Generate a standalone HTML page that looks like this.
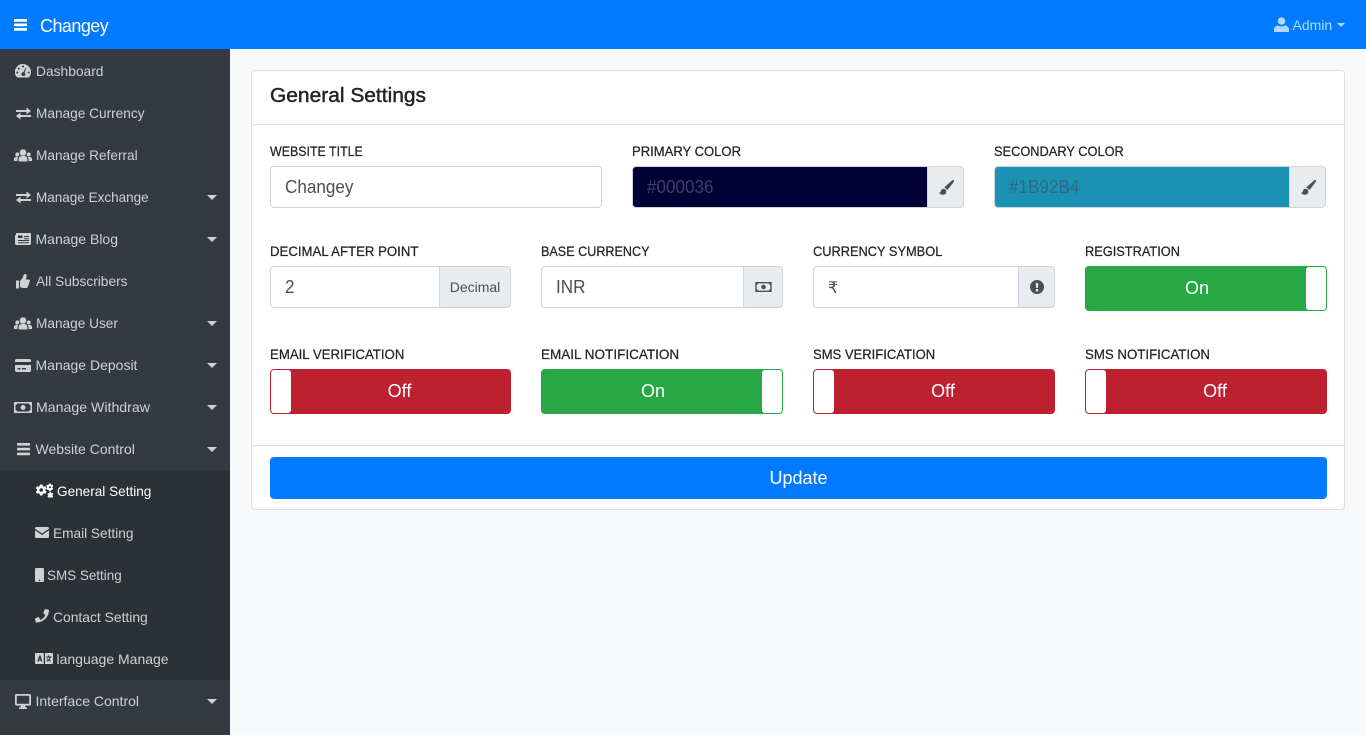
<!DOCTYPE html>
<html lang="en"><head><meta charset="utf-8"><title>General Settings</title>
<style>
html,body{margin:0;padding:0;width:1366px;height:735px;overflow:hidden;background:#f8f9fa;font-family:"Liberation Sans",sans-serif}
div,span,svg{box-sizing:border-box}
.a{position:absolute}
.t{position:absolute;white-space:nowrap;line-height:20px;height:20px;transform-origin:0 50%}
nav{position:absolute;left:0;top:0;width:1366px;height:49px;background:#007bff}
aside{position:absolute;left:0;top:49px;width:230px;height:686px;background:#343a40}
.sub{position:absolute;left:0;top:421px;width:230px;height:210px;background:#2c3136}
.m{color:#cfd1d3;font-size:14px;left:35.5px}
.s{color:#cfd1d3;font-size:14px}
svg.i{position:absolute;fill:#cfd1d3}
.car{position:absolute;left:207px;width:0;height:0;border-left:5px solid transparent;border-right:5px solid transparent;border-top:5px solid #cfd1d3}
.card{position:absolute;left:251px;top:70px;width:1094px;height:440px;background:#fff;border:1px solid #dfdfdf;border-radius:4px}
.l{position:absolute;font-size:14px;color:#212529;white-space:nowrap;line-height:20px;-webkit-text-stroke:.25px #212529;transform-origin:0 50%}
.f{position:absolute;background:#fff;border:1px solid #ced4da;border-radius:4px;height:42px;font-size:18px;color:#495057;line-height:41px;padding-left:14px}
.f span{display:inline-block;transform-origin:0 50%;transform:scaleX(.95)}
.ad{position:absolute;height:42px;background:#e9ecef;border:1px solid #ced4da;border-radius:0 4px 4px 0;color:#495057;text-align:center;line-height:40px}
.tg{position:absolute;width:242px;height:45px;border-radius:4px;color:#fff;font-size:18px;line-height:42px;text-align:center}
.on{background:#28a745;border:1px solid #28a745}
.off{background:#bd2130;border:1px solid #bd2130}
.th{position:absolute;top:0;width:20px;height:43px;background:#fff;border-radius:3px}
</style></head><body>
<nav>
<svg class="i" style="left:14px;top:19px;fill:#fff" width="13" height="12" viewBox="0 0 13 12"><rect y="0" width="13" height="2.800" rx=".5"/><rect y="4.500" width="13" height="2.800" rx=".5"/><rect y="9" width="13" height="2.800" rx=".5"/></svg>
<span class="t" style="left:40px;top:16px;font-size:18px;color:#fff;letter-spacing:-.55px">Changey</span>
<svg class="i" style="left:1274px;top:17px;fill:#b3d7ff" width="15" height="15" viewBox="0 0 15 15"><circle cx="7.500" cy="4" r="3.800"/><path d="M0 15v-2.500C0 10 2 8.500 4.300 8.500c1 .6 2 .9 3.200 .9s2.200-.3 3.200-.9C13 8.500 15 10 15 12.500V15z"/></svg>
<span class="t" style="left:1292.500px;top:15px;font-size:14px;color:#b3d7ff">Admin</span>
<div class="a" style="left:1337px;top:23px;border-left:4px solid transparent;border-right:4px solid transparent;border-top:4px solid #b3d7ff"></div>
</nav>
<aside>
<div class="sub"></div>
<svg class="i" style="left:15px;top:15px" width="16" height="14" viewBox="0 0 16 14"><path fill-rule="evenodd" d="M8 0a8 8 0 0 1 8 8c0 1.800-.6 3.500-1.500 4.800-.3.400-.7.700-1.200.700H2.700c-.5 0-.9-.3-1.200-.7A8 8 0 0 1 8 0zM8 1.500a1 1 0 1 0 0 2 1 1 0 0 0 0-2zM3.800 3.500a1 1 0 1 0 0 2 1 1 0 0 0 0-2zM2.300 7.500a1 1 0 1 0 0 2 1 1 0 0 0 0-2zM13.700 7.500a1 1 0 1 0 0 2 1 1 0 0 0 0-2zM10.800 3.500 8.500 8.100a2 2 0 1 0 1.100.4l1.900-4.700z"/></svg>
<span class="t m" style="top:12px;transform:scaleX(.985)">Dashboard</span>
<svg class="i" style="left:16px;top:58px" width="15" height="13" viewBox="0 0 15 13"><path d="M0 3h10.500V0.500L15 4l-4.500 3.500V5H0zM15 8H4.500V5.500L0 9l4.500 3.500V10H15z"/></svg>
<span class="t m" style="top:54px;transform:scaleX(.975)">Manage Currency</span>
<svg class="i" style="left:14px;top:100px" width="18" height="13" viewBox="0 0 18 13"><circle cx="9" cy="3.500" r="3.300"/><circle cx="3.300" cy="5.500" r="2"/><circle cx="14.700" cy="5.500" r="2"/><path d="M4.700 12.500V10c0-2 1.500-3 3-3h2.600c1.500 0 3 1 3 3v2.500zM0 12V10c0-1.200 1-2 2-2h2.200C3.500 9 3.500 10 3.500 12zM18 12v-2c0-1.200-1-2-2-2h-2.200c.7 1 .7 2 .7 4z"/></svg>
<span class="t m" style="top:96px;transform:scaleX(.975)">Manage Referral</span>
<svg class="i" style="left:16px;top:142px" width="15" height="13" viewBox="0 0 15 13"><path d="M0 3h10.500V0.500L15 4l-4.500 3.500V5H0zM15 8H4.500V5.500L0 9l4.500 3.500V10H15z"/></svg>
<span class="t m" style="top:138px;transform:scaleX(.965)">Manage Exchange</span><div class="car" style="top:146px"></div>
<svg class="i" style="left:15px;top:184px" width="16" height="12" viewBox="0 0 16 12"><path fill-rule="evenodd" d="M1 0h15v10.500c0 .8-.7 1.500-1.500 1.500H1.500C.7 12 0 11.300 0 10.500V2h1zM3 2.500v2.500h4.500V2.500zM9 3v1h5V3zM9 5.200v1h5v-1zM3 7v1h11V7zM3 9.200v1h11v-1z"/></svg>
<span class="t m" style="top:180px">Manage Blog</span><div class="car" style="top:188px"></div>
<svg class="i" style="left:16px;top:225px" width="14" height="15" viewBox="0 0 14 15"><rect y="6.500" width="3" height="8"/><path d="M4 7c1.500-1.500 3-3.500 3.500-5.500C7.700 .5 8 0 9 0c1.500 0 2 1.500 1.500 3L9.800 5.500h3c.7 0 1.200.6 1.200 1.300 0 .5-.3.9-.6 1.100.2.900-.1 1.500-.6 1.800.2.900-.2 1.500-.7 1.800.1 1.300-.6 2.500-2 2.500H7.500C6 14 5 13.500 4 13z"/></svg>
<span class="t m" style="top:222px;transform:scaleX(.98)">All Subscribers</span>
<svg class="i" style="left:14px;top:268px" width="18" height="13" viewBox="0 0 18 13"><circle cx="9" cy="3.500" r="3.300"/><circle cx="3.300" cy="5.500" r="2"/><circle cx="14.700" cy="5.500" r="2"/><path d="M4.700 12.500V10c0-2 1.500-3 3-3h2.600c1.500 0 3 1 3 3v2.500zM0 12V10c0-1.200 1-2 2-2h2.200C3.500 9 3.500 10 3.500 12zM18 12v-2c0-1.200-1-2-2-2h-2.200c.7 1 .7 2 .7 4z"/></svg>
<span class="t m" style="top:264px;transform:scaleX(.975)">Manage User</span><div class="car" style="top:272px"></div>
<svg class="i" style="left:15px;top:310px" width="16" height="13" viewBox="0 0 16 13"><path fill-rule="evenodd" d="M1.500 0h13c.8 0 1.500.7 1.500 1.500V3H0V1.500C0 .7.700 0 1.500 0zM0 6h16v5.500c0 .8-.7 1.500-1.500 1.500h-13C.7 13 0 12.300 0 11.500zm2.500 3v1.500h3V9zm4.500 0v1.500h4V9z"/></svg>
<span class="t m" style="top:306px">Manage Deposit</span><div class="car" style="top:314px"></div>
<svg class="i" style="left:14px;top:353px" width="18" height="11" viewBox="0 0 18 11"><path fill-rule="evenodd" d="M0 0h18v11H0zM3 1.500a1.500 1.500 0 0 1-1.500 1.500v5A1.500 1.500 0 0 1 3 9.500h12A1.500 1.500 0 0 1 16.500 8V3A1.500 1.500 0 0 1 15 1.500zM9 3a2.500 2.500 0 1 0 0 5 2.500 2.500 0 0 0 0-5z"/></svg>
<span class="t m" style="top:348px;transform:scaleX(1.01)">Manage Withdraw</span><div class="car" style="top:356px"></div>
<svg class="i" style="left:17px;top:394px" width="13" height="13" viewBox="0 0 13 13"><rect y="0" width="13" height="2.600" rx=".5"/><rect y="4.800" width="13" height="2.600" rx=".5"/><rect y="9.600" width="13" height="2.600" rx=".5"/></svg>
<span class="t m" style="top:390px">Website Control</span><div class="car" style="top:398px"></div>
<svg class="i" style="left:35px;top:434px;fill:#fff" width="18" height="15" viewBox="0 0 18 14"><path fill-rule="evenodd" d="M5 1h2.400l.3 1.500 1.200.7 1.500-.5 1.200 2.100-1.200 1v1.400l1.200 1-1.200 2.100-1.500-.5-1.200.7L7.400 12H5l-.3-1.500-1.200-.7-1.500.5L.8 8.200 2 7.200V5.800l-1.200-1L2 2.700l1.500.5 1.200-.7zM6.200 4.700a1.800 1.800 0 1 0 0 3.600 1.800 1.800 0 0 0 0-3.600z"/><path fill-rule="evenodd" d="M14 0h1.800l.2 1 .9.500 1-.3.400 1.500-.8.700v1l.8.700-.4 1.300-1-.3-.9.500-.2 1H14l-.2-1-.9-.5-1 .3-.6-1.300.8-.7v-1l-.8-.7.600-1.500 1 .3.900-.5zm.9 2.800a1 1 0 1 0 0 2 1 1 0 0 0 0-2zM14 8.300h1.800l.2 1 .9.500 1-.3.400 1.400-.8.700v.7l.8.700-.4 1h-4.800l-.6-1 .8-.7v-.7l-.8-.7.600-1.400 1 .3.900-.5z"/></svg>
<span class="t s" style="left:56.500px;top:432px;color:#fff;transform:scaleX(.97)">General Setting</span>
<svg class="i" style="left:35px;top:478px" width="14" height="11" viewBox="0 0 14 11"><path d="M0 1.200C0 .5.500 0 1.200 0h11.600c.7 0 1.200.5 1.200 1.200v.6L7 6.500 0 1.800zM0 3.300l7 4.700 7-4.700v6.500c0 .7-.5 1.200-1.200 1.200H1.200C.5 11 0 10.500 0 9.800z"/></svg>
<span class="t s" style="left:53px;top:474px;transform:scaleX(.975)">Email Setting</span>
<svg class="i" style="left:35px;top:519px" width="9" height="14" viewBox="0 0 9 14"><path fill-rule="evenodd" d="M1 0h7c.6 0 1 .4 1 1v12c0 .6-.4 1-1 1H1c-.6 0-1-.4-1-1V1c0-.6.4-1 1-1zm3.500 11.500a.8.800 0 1 0 0 1.600.8.800 0 0 0 0-1.600z"/></svg>
<span class="t s" style="left:47px;top:516px;transform:scaleX(.96)">SMS Setting</span>
<svg class="i" style="left:35px;top:560px" width="14" height="14" viewBox="0 0 14 14"><path d="M13.500 0.700 10.500 0c-.3 0-.6.100-.7.400L8.400 3.700c-.1.300 0 .6.200.8l1.800 1.500a10.800 10.800 0 0 1-5 5L3.900 8.200c-.2-.2-.5-.3-.8-.2L.400 9.400c-.3.100-.4.400-.4.700l.7 3c.1.300.3.500.6.500C8.300 13.600 14 7.900 14 1.300c0-.3-.2-.5-.5-.6z"/></svg>
<span class="t s" style="left:53px;top:558px;transform:scaleX(.99)">Contact Setting</span>
<svg class="i" style="left:35px;top:604px" width="18" height="11" viewBox="0 0 18 11"><path fill-rule="evenodd" d="M1 0h7.800v11H1c-.6 0-1-.4-1-1V1c0-.6.4-1 1-1zm9 0h7c.6 0 1 .4 1 1v9c0 .6-.4 1-1 1h-7zM4.300 2.500 2.300 8.500h1.300l.3-1h1.900l.3 1h1.300L5.500 2.500zM4.900 4.500l.5 2h-1zM13 2.500v1h-2v1h3.500c-.2.800-.6 1.500-1 2-.3-.3-.6-.7-.7-1h-1c.2.600.6 1.100 1 1.600-.4.300-.9.500-1.500.7l.4 1c.8-.3 1.400-.6 1.900-1 .5.400 1.100.7 1.900 1l.4-1c-.6-.2-1.100-.4-1.500-.7.500-.7 1-1.600 1.200-2.600h1v-1h-2.400v-1z"/></svg>
<span class="t s" style="left:56.500px;top:600px">language Manage</span>
<svg class="i" style="left:15px;top:645px" width="16" height="15" viewBox="0 0 16 15"><path fill-rule="evenodd" d="M1.300 0h13.400C15.400 0 16 .6 16 1.300v9c0 .7-.6 1.300-1.300 1.300H10l.5 1.800h1.500V15H4v-1.600h1.500l.5-1.800H1.300C.6 11.600 0 11 0 10.300v-9C0 .6.600 0 1.300 0zm.5 1.700v8h12.400v-8z"/></svg>
<span class="t m" style="top:642px">Interface Control</span><div class="car" style="top:650px"></div>
</aside>

<div class="card"></div>
<div class="a" style="left:252px;top:124px;width:1092px;height:1px;background:#dfdfdf"></div>
<div class="a" style="left:252px;top:445px;width:1092px;height:1px;background:#dfdfdf"></div>
<span class="t" style="left:270px;top:86px;font-size:20px;color:#212529;font-weight:400;-webkit-text-stroke:.45px #212529;transform:scaleX(1.047)">General Settings</span>

<span class="l" style="left:270px;top:141px;transform:scaleX(.886)">WEBSITE TITLE</span>
<div class="f" style="left:270px;top:166px;width:332px"><span>Changey</span></div>
<span class="l" style="left:632px;top:141px;transform:scaleX(.932)">PRIMARY COLOR</span>
<div class="f" style="left:632px;top:166px;width:296px;background:#000036;border-radius:4px 0 0 4px;color:#3f3f63"><span>#000036</span></div>
<div class="ad" style="left:927px;top:166px;width:37px"><svg class="i" style="left:11px;top:13px;fill:#495057" width="15" height="15" viewBox="0 0 15 15"><path d="M14.800.2c-.5-.4-1.200-.2-1.700.2L6.500 6.200c-.5.500-.9 1-1 1.600 1 .2 1.900 1 2.200 2 .7-.1 1.300-.5 1.800-1.100L14.700 2c.4-.6.500-1.300.1-1.800zM4.700 8.700C3 8.700 2 9.700 1.800 11.200 1.600 12.300.8 12.600 0 12.700c1 1.500 2.700 2.100 4.200 2 2 0 3.400-1.300 3.100-3.300-.2-1.500-1.200-2.700-2.600-2.700z"/></svg></div>
<span class="l" style="left:994px;top:141px;transform:scaleX(.915)">SECONDARY COLOR</span>
<div class="f" style="left:994px;top:166px;width:296px;background:#1b92b4;border-radius:4px 0 0 4px;color:#2f6a80"><span>#1B92B4</span></div>
<div class="ad" style="left:1289px;top:166px;width:37px"><svg class="i" style="left:11px;top:13px;fill:#495057" width="15" height="15" viewBox="0 0 15 15"><path d="M14.800.2c-.5-.4-1.200-.2-1.700.2L6.500 6.200c-.5.500-.9 1-1 1.600 1 .2 1.900 1 2.200 2 .7-.1 1.300-.5 1.800-1.100L14.700 2c.4-.6.500-1.300.1-1.800zM4.700 8.700C3 8.700 2 9.700 1.800 11.200 1.600 12.300.8 12.600 0 12.700c1 1.500 2.700 2.100 4.200 2 2 0 3.400-1.300 3.100-3.300-.2-1.500-1.200-2.700-2.600-2.700z"/></svg></div>

<span class="l" style="left:270px;top:241px;transform:scaleX(.943)">DECIMAL AFTER POINT</span>
<div class="f" style="left:270px;top:266px;width:170px;border-radius:4px 0 0 4px"><span>2</span></div>
<div class="ad" style="left:439px;top:266px;width:72px;font-size:14px">Decimal</div>
<span class="l" style="left:541px;top:241px;transform:scaleX(.9)">BASE CURRENCY</span>
<div class="f" style="left:541px;top:266px;width:203px;border-radius:4px 0 0 4px"><span>INR</span></div>
<div class="ad" style="left:743px;top:266px;width:40px"><svg class="i" style="left:11px;top:15px;fill:#495057" width="17" height="10" viewBox="0 0 18 11"><path fill-rule="evenodd" d="M0 0h18v11H0zM3 1.500a1.500 1.500 0 0 1-1.500 1.500v5A1.500 1.500 0 0 1 3 9.500h12A1.500 1.500 0 0 1 16.500 8V3A1.500 1.500 0 0 1 15 1.500zM9 3a2.500 2.500 0 1 0 0 5 2.500 2.500 0 0 0 0-5z"/></svg></div>
<span class="l" style="left:813px;top:241px;transform:scaleX(.915)">CURRENCY SYMBOL</span>
<div class="f" style="left:813px;top:266px;width:206px;border-radius:4px 0 0 4px;font-family:'DejaVu Sans',sans-serif;font-size:16px">₹</div>
<div class="ad" style="left:1018px;top:266px;width:37px"><svg class="i" style="left:11px;top:13px;fill:#495057" width="14" height="14" viewBox="0 0 14 14"><path fill-rule="evenodd" d="M7 0a7 7 0 1 1 0 14A7 7 0 0 1 7 0zM5.800 3l.3 5h1.800l.3-5zM7 9a1.300 1.300 0 1 0 0 2.600A1.300 1.300 0 0 0 7 9z"/></svg></div>
<span class="l" style="left:1085px;top:241px;transform:scaleX(.913)">REGISTRATION</span>
<div class="tg on" style="left:1085px;top:266px;padding-right:18px;line-height:43px">On<div class="th" style="right:0"></div></div>

<span class="l" style="left:270px;top:344px;transform:scaleX(.944)">EMAIL VERIFICATION</span>
<div class="tg off" style="left:270px;top:369px;width:241px;padding-left:18px">Off<div class="th" style="left:0"></div></div>
<span class="l" style="left:541px;top:344px;transform:scaleX(.965)">EMAIL NOTIFICATION</span>
<div class="tg on" style="left:541px;top:369px;padding-right:18px">On<div class="th" style="right:0"></div></div>
<span class="l" style="left:813px;top:344px;transform:scaleX(.931)">SMS VERIFICATION</span>
<div class="tg off" style="left:813px;top:369px;padding-left:18px">Off<div class="th" style="left:0"></div></div>
<span class="l" style="left:1085px;top:344px;transform:scaleX(.947)">SMS NOTIFICATION</span>
<div class="tg off" style="left:1085px;top:369px;padding-left:18px">Off<div class="th" style="left:0"></div></div>

<div class="a" style="left:270px;top:457px;width:1057px;height:42px;background:#007bff;border-radius:4px;color:#fff;font-size:18px;line-height:42px;text-align:center">Update</div>
</body></html>
